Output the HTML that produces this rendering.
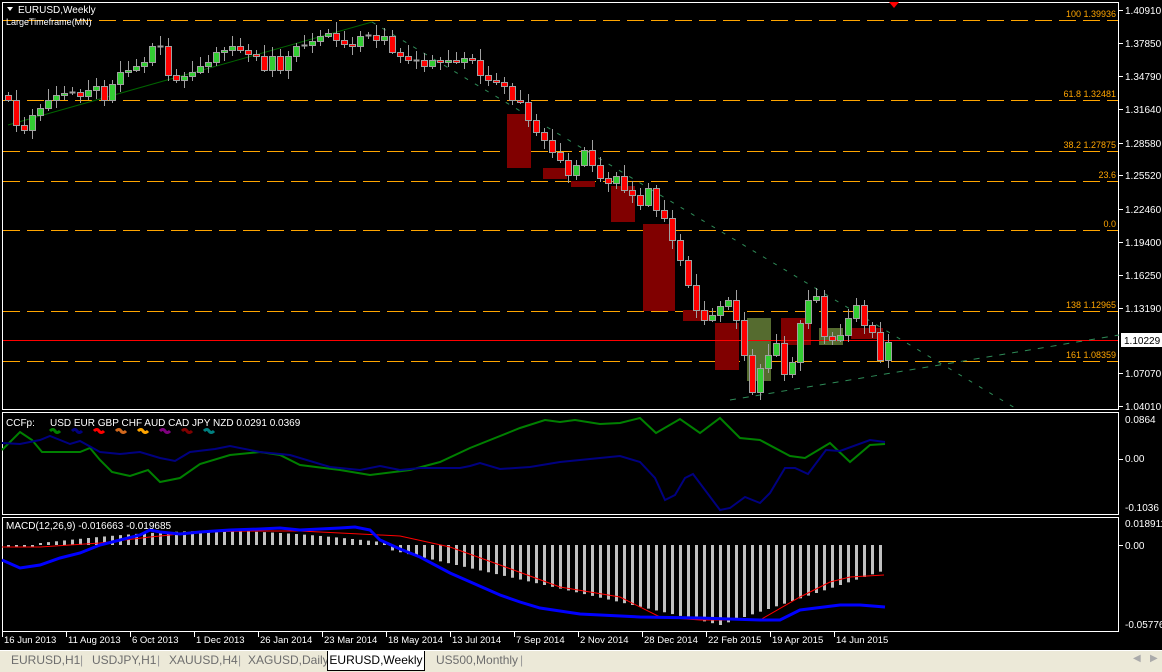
<!DOCTYPE html>
<html><head><meta charset="utf-8"><style>
*{margin:0;padding:0}
body{width:1162px;height:671px;background:#000;overflow:hidden;font-family:"Liberation Sans",sans-serif;position:relative}
svg{position:absolute;left:0;top:0}
.tabs{position:absolute;left:0;top:650px;width:1162px;height:21px;background:#ece9d8;border-top:1px solid #fff}
.tab{position:absolute;top:2px;font-size:12px;color:#6d6d6d}
.act{position:absolute;left:327px;top:0;width:96px;height:19px;background:#fff;border:1px solid #000;border-top:none;font-size:12px;color:#000;text-align:center;line-height:18px}
</style></head><body>
<svg id="s" width="1162" height="650" font-family="Liberation Sans, sans-serif" font-size="10">
<rect x="2.5" y="2.5" width="1116" height="407" fill="none" stroke="#fff"/>
<rect x="2.5" y="412.5" width="1116" height="102" fill="none" stroke="#fff"/>
<rect x="2.5" y="517.5" width="1116" height="114" fill="none" stroke="#fff"/>
</svg>
<div class="tabs">
<span class="tab" style="left:11px">EURUSD,H1</span><span class="tab" style="left:80px;color:#999">|</span>
<span class="tab" style="left:92px">USDJPY,H1</span><span class="tab" style="left:157px;color:#999">|</span>
<span class="tab" style="left:169px">XAUUSD,H4</span><span class="tab" style="left:238px;color:#999">|</span>
<span class="tab" style="left:248px">XAGUSD,Daily</span>
<div class="act">EURUSD,Weekly</div>
<span class="tab" style="left:436px">US500,Monthly</span><span class="tab" style="left:520px;color:#999">|</span>
<span class="tab" style="left:1133px;color:#aaa;font-size:10px">◀</span><span class="tab" style="left:1150px;color:#aaa;font-size:10px">▶</span>
</div>
<script>
var s=document.getElementById('s'),h='';
function L(x1,y1,x2,y2,c,w,d){h+='<line x1="'+x1+'" y1="'+y1+'" x2="'+x2+'" y2="'+y2+'" stroke="'+c+'" stroke-width="'+(w||1)+'"'+(d?' stroke-dasharray="'+d+'"':'')+'/>';}
function R(x,y,w,hh,f,st){h+='<rect x="'+x+'" y="'+y+'" width="'+w+'" height="'+hh+'" fill="'+f+'"'+(st?' stroke="'+st+'"':'')+'/>';}
function T(x,y,t,c,a,fs){h+='<text x="'+x+'" y="'+y+'" fill="'+c+'"'+(a?' text-anchor="'+a+'"':'')+(fs?' font-size="'+fs+'"':'')+'>'+t+'</text>';}
function P(pts,c,w){h+='<polyline fill="none" stroke="'+c+'" stroke-width="'+w+'" points="'+pts+'"/>';}
// fib lines
[[20,'100  1.39936'],[100,'61.8  1.32481'],[151,'38.2  1.27875'],[181,'23.6'],[230,'0.0'],[311,'138   1.12965'],[361,'161   1.08359']].forEach(function(f){L(3,f[0]+.5,1118,f[0]+.5,'#ffa500',1,'17 7');T(1116,f[0]-3,f[1],'#ffa500','end',9);});
// rectangles
R(507,114,24,54,'#800000');R(543,168,24,11,'#800000');R(571,181,24,6,'#800000');R(611,186,24,36,'#800000');
R(643,224,32,87,'#800000');R(683,310,26,11,'#800000');R(715,323,24,47,'#800000');R(747,318,24,63,'#556b2f');
R(781,318,30,27,'#800000');R(819,328,24,17,'#556b2f');R(851,328,32,11,'#800000');
L(3,340.5,1118,340.5,'#ff0000');
// trend lines
L(8,125,372,22,'#006400');L(372,22,1015,408,'#2e8b57',1,'4 8');L(730,400,1119,335,'#2e8b57',1,'6 7');
// candles
var c=[100,125,130,115,108,100,95,93,92,96,90,86,100,84,72,70,66,62,46,46,75,80,76,72,66,62,52,50,46,50,54,56,70,56,70,56,46,45,41,36,33,40,44,46,36,35,40,36,52,56,60,60,66,60,62,60,62,58,60,75,80,82,86,100,102,120,132,140,152,160,175,165,150,165,178,183,176,190,195,205,188,210,218,240,260,285,310,320,315,306,300,320,355,392,368,355,343,374,362,323,300,296,336,340,335,318,305,325,332,360,342];
for(var i=0;i<c.length;i++){var x=8+8*i,o=i?c[i-1]:95,cl=c[i],t=Math.min(o,cl),b=Math.max(o,cl);
var hi=t-3-(i*7)%9,lo=b+2+(i*5)%8;L(x+.5,hi,x+.5,lo,'#a0a0a0');
if(b-t<2){R(x-2.5,t-.5,6,2,'#a0a0a0');}else R(x-2.5,t+.5,6,b-t,cl<o?'#32cd32':'#ff0000','#a0a0a0');}
// axis
var ax=[[10,'1.40910'],[43,'1.37850'],[76,'1.34790'],[109,'1.31640'],[143,'1.28580'],[175,'1.25520'],[209,'1.22460'],[242,'1.19400'],[275,'1.16250'],[308,'1.13190'],[373,'1.07070'],[406,'1.04010']];
ax.forEach(function(a){L(1119,a[0]+.5,1123,a[0]+.5,'#fff');T(1125,a[0]+4,a[1],'#fff');});
R(1121,333,42,14,'#fff');T(1124,344,'1.10229','#000');
T(1125,423,'0.0864','#fff');L(1119,459.5,1123,459.5,'#fff');T(1125,462,'0.00','#fff');T(1125,511,'-0.1036','#fff');
T(1125,527,'0.018911','#fff');L(1119,545.5,1123,545.5,'#fff');T(1125,549,'0.00','#fff');T(1125,628,'-0.057768','#fff');
h+='<polygon points="889,2 899,2 894,8" fill="#ff0000"/>';
T(18,13,'EURUSD,Weekly','#fff',0,10);h+='<polygon points="7,7 13,7 10,11" fill="#fff"/>';T(6,25,'LargeTimeframe(MN)','#fff',0,9);
// CCFp
T(6,426,'CCFp:','#fff');T(50,426,'USD EUR GBP CHF AUD CAD JPY NZD 0.0291 0.0369','#fff');
['#008000','#000080','#ff0000','#d2691e','#ffa500','#800080','#800000','#008080'].forEach(function(col,k){var x=50+22*k;h+='<path d="M'+x+' 431 q3 -3 5 0 t5 0" stroke="'+col+'" stroke-width="3" fill="none"/>';});
P('2,450 20,432 32,440 42,452 80,452 90,448 100,460 112,472 130,476 148,470 160,482 180,478 200,464 230,455 260,452 280,455 300,465 340,470 370,475 410,470 440,462 470,448 510,432 520,428 545,420 560,422 575,420 600,424 620,423 640,418 656,433 680,419 700,433 720,418 740,438 760,440 790,456 805,458 830,443 850,462 870,445 885,444','#008000',2);
P('2,443 20,444 40,440 50,436 70,444 80,441 100,452 120,454 140,452 160,458 175,461 190,452 215,449 230,446 260,452 290,455 330,467 360,470 380,466 400,470 420,468 460,468 470,466 480,463 500,469 530,467 560,462 610,457 620,456 640,462 655,478 665,500 675,495 685,478 693,474 720,510 730,508 745,497 760,503 770,493 785,468 795,468 808,474 826,450 840,451 870,440 885,442','#000080',2);
// MACD hist
function hv(x){if(x<40)return -2;if(x<390){var m=Math.sin((x-40)/350*Math.PI);return 2+12*m;}if(x<720)return -(5+75*(x-390)/330);return -(80-55*(x-720)/165);}
for(var x=8;x<=884;x+=8){var v=hv(x);if(v>=0)R(x-1,545-v,3,v,'#c0c0c0');else R(x-1,545,3,-v,'#c0c0c0');}
P('2,547 40,547 100,543 150,537 200,532 250,531 300,531 380,535 400,536 450,547 500,565 560,587 620,597 660,617 700,620 760,620 800,597 830,582 850,577 884,575','#ff0000',1);
P('2,560 20,568 40,565 60,558 80,553 100,545 120,540 140,535 150,530 160,532 180,534 200,532 230,530 260,529 280,528 300,530 340,528 355,527 370,530 380,540 400,549 420,557 450,573 500,595 520,602 540,608 580,614 640,617 700,618 760,620 780,620 800,610 840,605 860,605 885,607','#0000ff',3);
T(6,529,'MACD(12,26,9) -0.016663 -0.019685','#fff');
// dates
var d=['16 Jun 2013','11 Aug 2013','6 Oct 2013','1 Dec 2013','26 Jan 2014','23 Mar 2014','18 May 2014','13 Jul 2014','7 Sep 2014','2 Nov 2014','28 Dec 2014','22 Feb 2015','19 Apr 2015','14 Jun 2015'];
d.forEach(function(t,k){var x=2+64*k;L(x+.5,632,x+.5,637,'#fff');T(x+2,643,t,'#fff',0,9.5);});
s.innerHTML+=h;
</script>
</body></html>
